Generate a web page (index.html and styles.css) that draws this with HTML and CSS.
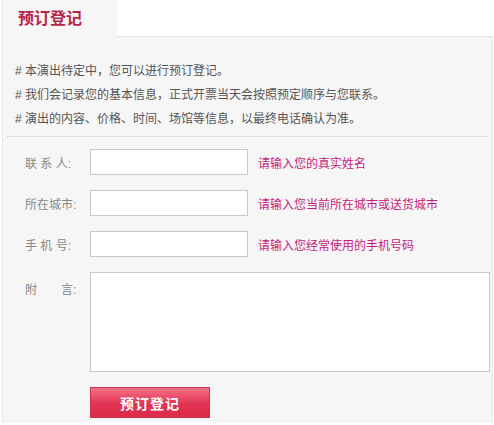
FILE: index.html
```html
<!DOCTYPE html>
<html lang="zh-CN">
<head>
    <meta charset="UTF-8">
    <title>预订登记</title>
    <link rel="stylesheet" href="styles.css">
</head>
<body>
    <div class="wrap">
        <div class="tabbar">
            <div class="tab">预订登记</div>
        </div>
        <div class="panel">
            <div class="info">
                <p># 本演出待定中，您可以进行预订登记。</p>
                <p># 我们会记录您的基本信息，正式开票当天会按照预定顺序与您联系。</p>
                <p># 演出的内容、价格、时间、场馆等信息，以最终电话确认为准。</p>
            </div>
            <form class="form">
                <div class="row">
                    <label>联 系 人:</label>
                    <input type="text" class="field">
                    <span class="hint">请输入您的真实姓名</span>
                </div>
                <div class="row">
                    <label>所在城市:</label>
                    <input type="text" class="field">
                    <span class="hint">请输入您当前所在城市或送货城市</span>
                </div>
                <div class="row">
                    <label>手 机 号:</label>
                    <input type="text" class="field">
                    <span class="hint">请输入您经常使用的手机号码</span>
                </div>
                <div class="row row-top">
                    <label>附&emsp;&emsp;言:</label>
                    <textarea class="memo"></textarea>
                </div>
                <div class="actions">
                    <button type="button" class="btn">预订登记</button>
                </div>
            </form>
        </div>
    </div>
</body>
</html>
```

FILE: styles.css
```css
body {
    margin: 0;
    background-color: #fff;
    font-family: "Liberation Sans", "Noto Sans CJK SC", sans-serif;
    font-size: 12px;
    color: #555;
}
.wrap {
    margin: 0 1px 0 2px;
}
.tabbar {
    display: flex;
    height: 36px;
    border-bottom: 1px solid #e4e4e4;
}
.tab {
    width: 115px;
    height: 37px;
    box-sizing: border-box;
    padding: 1px 0 0 15px;
    line-height: 36px;
    background-color: #f6f6f6;
    border-left: 1px solid #e6e6e6;
    color: #b8234a;
    font-size: 16px;
    font-weight: bold;
}
.panel {
    background-color: #f6f6f6;
    border-left: 1px solid #e6e6e6;
    border-right: 1px solid #e6e6e6;
    padding-bottom: 5px;
}
.info {
    margin: 0 4px;
    padding: 22px 0 5px 8px;
    border-bottom: 1px dotted #c8c8c8;
}
.info p {
    margin: 0;
    line-height: 24px;
    color: #555;
}
.form {
    padding: 12px 0 0 22px;
}
.row {
    display: flex;
    align-items: center;
    margin-bottom: 15px;
}
.row label {
    width: 65px;
    color: #888;
}
.row-top {
    align-items: flex-start;
}
.row-top label {
    padding-top: 8px;
}
.field {
    width: 158px;
    height: 26px;
    box-sizing: border-box;
    margin: 0;
    border: 1px solid #c8c8c8;
    background-color: #fff;
}
.hint {
    margin-left: 10px;
    color: #c51c7c;
}
.memo {
    width: 400px;
    height: 100px;
    box-sizing: border-box;
    margin: 0;
    border: 1px solid #c8c8c8;
    background-color: #fff;
    resize: none;
}
.actions {
    padding-left: 65px;
}
.btn {
    width: 120px;
    height: 31px;
    border: 1px solid #c9344f;
    background: linear-gradient(#f37189, #e23352 55%, #dc2b4a);
    color: #fff;
    font-family: "Liberation Sans", "Noto Sans CJK SC", sans-serif;
    font-size: 14px;
    font-weight: bold;
    letter-spacing: 1px;
    cursor: pointer;
}
```
